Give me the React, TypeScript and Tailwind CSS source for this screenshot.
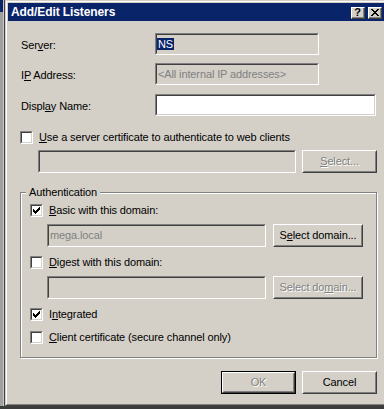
import React from "react";

function U({ children }: { children: React.ReactNode }) {
  return <span className="underline decoration-1 underline-offset-[1px]">{children}</span>;
}

function Sunken({
  className = "",
  inner = "",
  children,
}: {
  className?: string;
  inner?: string;
  children?: React.ReactNode;
}) {
  return (
    <div className={`shrink-0 border border-t-[#808080] border-l-[#808080] border-b-white border-r-white ${className}`}>
      <div
        className={`h-full w-full border border-t-[#404040] border-l-[#404040] border-b-[#d4d0c8] border-r-[#d4d0c8] ${inner}`}
      >
        {children}
      </div>
    </div>
  );
}

const CHECK_COLS = [2, 3, 4, 3, 2, 1, 0];

function Check({ checked }: { checked?: boolean }) {
  return (
    <Sunken className="w-[13px] h-[13px]" inner="bg-white flex items-center justify-center">
      {checked && (
        <svg width="7" height="7" viewBox="0 0 7 7" shapeRendering="crispEdges">
          {CHECK_COLS.map((t, i) => (
            <rect key={i} x={i} y={t} width="1" height="3" fill="#000" />
          ))}
        </svg>
      )}
    </Sunken>
  );
}

function Btn({
  className = "",
  disabled,
  def,
  children,
}: {
  className?: string;
  disabled?: boolean;
  def?: boolean;
  children: React.ReactNode;
}) {
  const body = (
    <div className="h-full w-full border border-t-white border-l-white border-r-[#404040] border-b-[#404040]">
      <div className="h-full w-full border border-t-[#d4d0c8] border-l-[#d4d0c8] border-r-[#808080] border-b-[#808080] flex items-center justify-center">
        <span className={disabled ? "text-[#808080] [text-shadow:1px_1px_0_#fff]" : "text-black"}>{children}</span>
      </div>
    </div>
  );
  return (
    <div className={`shrink-0 ${def ? "border border-black" : ""} ${className}`}>{body}</div>
  );
}

function CheckRow({ checked, children, className = "" }: { checked?: boolean; children: React.ReactNode; className?: string }) {
  return (
    <div className={`flex items-center h-[13px] gap-[6px] ${className}`}>
      <Check checked={checked} />
      <span className="whitespace-nowrap">{children}</span>
    </div>
  );
}

const X_PIX = [
  "11....11",
  ".11..11.",
  "..1111..",
  "...11...",
  "..1111..",
  ".11..11.",
  "11....11",
];

function TitleBtn({ children }: { children: React.ReactNode }) {
  return (
    <div className="w-[14px] h-[12px] bg-[#d4d0c8] border border-t-white border-l-white border-r-[#404040] border-b-[#404040]">
      <div className="h-full w-full border-r border-b border-r-[#808080] border-b-[#808080] flex items-center justify-center">
        {children}
      </div>
    </div>
  );
}

export default function App() {
  return (
    <div className="w-[384px] h-[409px] overflow-hidden bg-[#474747] flex flex-col [font-family:'Liberation_Sans',Arial,sans-serif] text-[11px] tracking-[-0.12px] text-black">
      <div className="flex flex-row h-[406px]">
        {/* strip left of dialog */}
        <div className="w-[3px] flex flex-col">
          <div className="h-[12px] bg-[#0a246a]" />
          <div className="flex-1 bg-[#a0a0a0]" />
        </div>
        <div className="w-[1px] bg-[#c8c8c8]" />
        <div className="w-[1px] bg-[#404040]" />
        {/* dialog */}
        <div className="flex-1 border-t border-l border-b border-t-[#d4d0c8] border-l-[#d4d0c8] border-b-[#404040]">
          <div className="h-full border-t border-l border-b border-t-white border-l-white border-b-[#808080] bg-[#d4d0c8] p-[1px] pr-0 flex flex-col">
            {/* title bar */}
            <div className="h-[18px] bg-[#0a246a] flex items-center justify-between pl-[3px] pr-[2px] shrink-0">
              <span className="text-white font-bold text-[12px] tracking-[-0.1px] leading-none">Add/Edit Listeners</span>
              <div className="flex gap-[3px] mt-[1px]">
                <TitleBtn>
                  <span className="font-bold text-[11px] leading-none text-black tracking-normal mt-[1px]">?</span>
                </TitleBtn>
                <TitleBtn>
                  <svg width="8" height="7" viewBox="0 0 8 7" shapeRendering="crispEdges">
                    {X_PIX.flatMap((row, y) =>
                      row.split("").map((c, x) =>
                        c === "1" ? <rect key={`${x}-${y}`} x={x} y={y} width="1" height="1" fill="#000" /> : null
                      )
                    )}
                  </svg>
                </TitleBtn>
              </div>
            </div>

            {/* body */}
            <div className="flex flex-col pl-[12px] pt-[12px]">
              <div className="flex items-center h-[22px]">
                <div className="w-[135px] pt-[3px] pl-[1px]">
                  Ser<U>v</U>er:
                </div>
                <Sunken className="w-[164px] h-[22px]" inner="bg-[#d4d0c8] flex items-center">
                  <span className="bg-[#0a246a] text-white px-[1px] leading-[12px]">NS</span>
                </Sunken>
              </div>

              <div className="flex items-center h-[22px] mt-[8px]">
                <div className="w-[135px] pt-[3px] pl-[1px]">
                  I<U>P</U> Address:
                </div>
                <Sunken className="w-[164px] h-[22px]" inner="bg-[#d4d0c8] flex items-center pl-[1px]">
                  <span className="text-[#808080] whitespace-nowrap">&lt;All internal IP addresses&gt;</span>
                </Sunken>
              </div>

              <div className="flex items-center h-[22px] mt-[9px]">
                <div className="w-[135px] pt-[3px] pl-[1px]">
                  Displ<U>a</U>y Name:
                </div>
                <Sunken className="w-[221px] h-[22px]" inner="bg-white" />
              </div>

              <CheckRow className="mt-[15px] gap-[5px]">
                <U>U</U>se a server certificate to authenticate to web clients
              </CheckRow>

              <div className="flex items-center mt-[6px] ml-[18px] gap-[6px]">
                <Sunken className="w-[258px] h-[23px]" inner="bg-[#d4d0c8]" />
                <Btn className="w-[75px] h-[23px]" disabled>
                  <U>S</U>elect...
                </Btn>
              </div>

              {/* group box */}
              <div className="relative mt-[19px] w-[357px] border border-[#808080] shadow-[inset_1px_1px_0_#fff,1px_1px_0_#fff] pt-[11px] pl-[9px] pb-[13px] flex flex-col">
                <span className="absolute left-[5px] top-[-7px] px-[3px] bg-[#d4d0c8] leading-[13px]">Authentication</span>

                <CheckRow checked>
                  <U>B</U>asic with this domain:
                </CheckRow>
                <div className="flex items-center mt-[7px] ml-[17px] gap-[7px]">
                  <Sunken className="w-[219px] h-[23px]" inner="bg-[#d4d0c8] flex items-center pl-[1px]">
                    <span className="text-[#808080]">mega.local</span>
                  </Sunken>
                  <Btn className="w-[90px] h-[23px]">
                    S<U>e</U>lect domain...
                  </Btn>
                </div>

                <CheckRow className="mt-[9px]">
                  <U>D</U>igest with this domain:
                </CheckRow>
                <div className="flex items-center mt-[7px] ml-[17px] gap-[7px]">
                  <Sunken className="w-[219px] h-[23px]" inner="bg-[#d4d0c8]" />
                  <Btn className="w-[90px] h-[23px]" disabled>
                    Select do<U>m</U>ain...
                  </Btn>
                </div>

                <CheckRow checked className="mt-[9px]">
                  I<U>n</U>tegrated
                </CheckRow>
                <CheckRow className="mt-[10px]">
                  <U>C</U>lient certificate (secure channel only)
                </CheckRow>
              </div>

              <div className="flex justify-end gap-[6px] w-[357px] mt-[13px]">
                <Btn className="w-[75px] h-[23px]" disabled def>
                  OK
                </Btn>
                <Btn className="w-[75px] h-[23px]">Cancel</Btn>
              </div>
            </div>
          </div>
        </div>
      </div>
      <div className="h-[3px] bg-[#3c3c3c]" />
    </div>
  );
}
